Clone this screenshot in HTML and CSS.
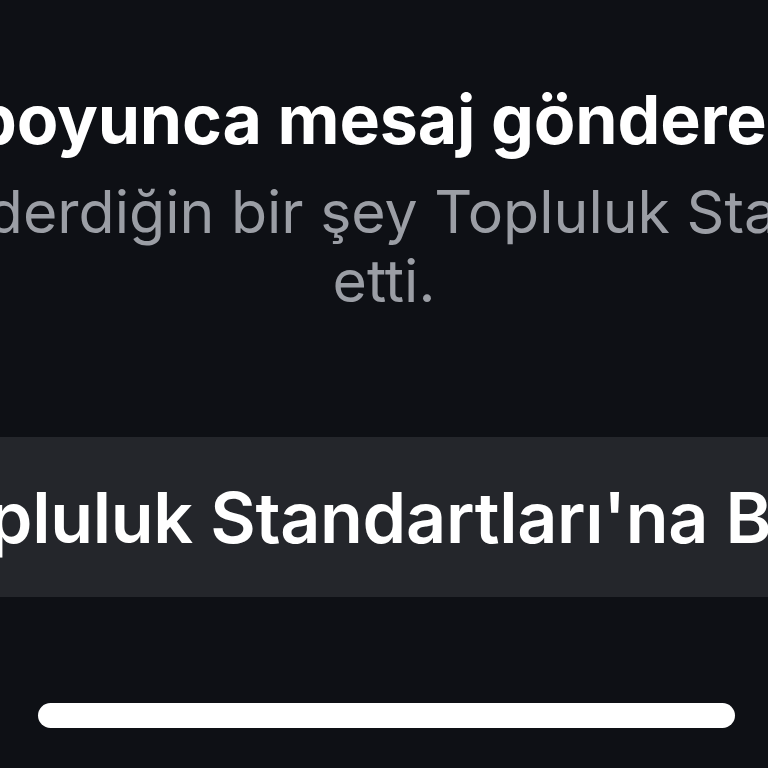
FILE: index.html
```html
<!DOCTYPE html>
<html lang="tr">
<head>
  <meta charset="UTF-8">
  <meta name="viewport" content="width=device-width, initial-scale=1.0">
  <title>Mesaj gönderemezsin</title>
  <link rel="stylesheet" href="styles.css">
</head>
<body>
  <div class="sheet">
    <h1 class="title">boyunca mesaj gönderemezsin</h1>
    <p class="subtitle">Daha önce gönderdiğin bir şey Topluluk Standartları'nı ihlal<br>etti.</p>

    <a href="#" class="button"><span class="button-label">Topluluk Standartları'na Bak</span></a>

    <div class="home-bar">
      <div class="home-indicator"></div>
    </div>
  </div>
</body>
</html>
```

FILE: styles.css
```css
/* General Reset */
* {
  margin: 0;
  padding: 0;
  box-sizing: border-box;
}

html,
body {
  height: 100%;
}

body {
  font-family: 'Inter', 'Liberation Sans', sans-serif;
  background-color: #0e1015;
  overflow: hidden;
}

.sheet {
  display: flex;
  flex-direction: column;
  width: 768px;
  height: 768px;
  padding-top: 78px;
}

.title {
  font-size: 68px;
  font-weight: 700;
  line-height: 82px;
  letter-spacing: -0.2px;
  color: #ffffff;
  white-space: nowrap;
  margin-left: -26px;
}

/* wider than the screen, centred on it */
.subtitle {
  width: 2400px;
  margin-left: -816px;
  margin-top: 17px;
  font-size: 59px;
  line-height: 69px;
  color: #9b9ea5;
  text-align: center;
  white-space: nowrap;
}

/* Button Styles */
.button {
  display: flex;
  align-items: center;
  height: 160px;
  margin-top: 122px;
  background-color: #24262b;
  text-decoration: none;
}

.button-label {
  font-size: 70px;
  font-weight: 600;
  letter-spacing: -0.3px;
  color: #ffffff;
  white-space: nowrap;
  margin-left: -94px;
}

.home-bar {
  display: flex;
  justify-content: center;
  padding-top: 106px;
}

.home-indicator {
  width: 697px;
  height: 25px;
  border-radius: 13px;
  background: #ffffff;
  margin-left: 4px;
}
```
